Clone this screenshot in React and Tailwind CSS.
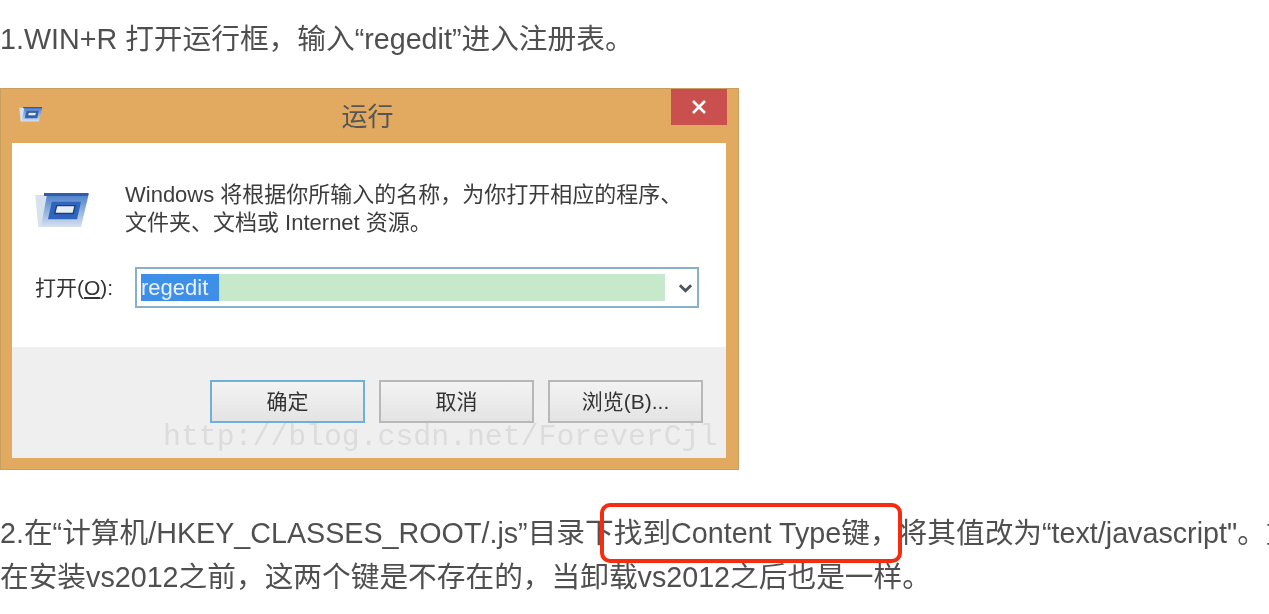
const FONT = "font-['Liberation_Sans','Noto_Sans_CJK_SC',sans-serif]"

function RunIcon({ className }) {
  return (
    <svg viewBox="0 0 56 36" className={className}>
      <defs>
        <linearGradient id="runBody" x1="0" y1="0" x2="0" y2="1">
          <stop offset="0" stopColor="#4a7ecb" />
          <stop offset="1" stopColor="#d5e1ee" />
        </linearGradient>
      </defs>
      <path d="M9 1H55L47 35H3Z" fill="url(#runBody)" />
      <path d="M0 2H12L6 34H3Z" fill="#d6e2ee" />
      <path d="M9 0H55L54 3H9Z" fill="#2f5da8" />
      <path d="M17 9H47L43 27H13Z" fill="#2f66bd" />
      <path d="M22 13H41L39 21H20Z" fill="#e6eef8" stroke="#1f3f78" strokeWidth="1.5" />
    </svg>
  )
}

function DialogButton({ label, focused }) {
  return (
    <div
      className={`flex h-[43px] w-[155px] items-center justify-center border-2 bg-gradient-to-b from-[#f3f3f3] to-[#e4e4e4] text-[21px] text-[#333] ${
        focused ? 'border-[#6fb0d8]' : 'border-[#b8b8b8]'
      }`}
    >
      {label}
    </div>
  )
}

function RunDialog() {
  return (
    <div className="relative w-[739px] border border-[#c99f60] bg-[#e1aa60] pb-[11px] pl-[11px] pr-[12px] blur-[0.4px]">
      <div className="relative flex h-[54px] items-center justify-center pt-[2px]">
        <RunIcon className="absolute left-[6px] top-[18px] h-[15px] w-[26px]" />
        <span className="pr-[3px] text-[26px] text-[#555]">运行</span>
        <div className="absolute right-[-1px] top-0 flex h-[36px] w-[56px] items-center justify-center bg-[#c9504f]">
          <svg viewBox="0 0 16 16" className="h-[16px] w-[16px]">
            <path d="M2 2L14 14M14 2L2 14" stroke="#fff" strokeWidth="2.6" />
          </svg>
        </div>
      </div>

      <div className="bg-white">
        <div className="h-[204px] pl-[23px] pr-[26px] pt-[38px]">
          <div className="flex gap-[35px]">
            <RunIcon className="mt-[12px] h-[35px] w-[55px] shrink-0" />
            <p className="whitespace-nowrap text-[22px] leading-[28px] text-[#3c3c3c]">
              Windows 将根据你所输入的名称，为你打开相应的程序、
              <br />
              文件夹、文档或 Internet 资源。
            </p>
          </div>
          <div className="mt-[30px] flex items-center gap-[20px]">
            <span className="w-[80px] text-[21px] text-[#333]">
              打开(<span className="underline">O</span>):
            </span>
            <div className="flex h-[41px] w-[564px] items-center border-2 border-[#86b1c9] pl-[4px]">
              <div className="h-[27px] w-[524px] bg-[#c6e9cc]">
                <span className="block h-[27px] w-[78px] bg-[#3e8fe8] text-[22px] leading-[27px] text-[#e8f2ff]">
                  regedit
                </span>
              </div>
              <svg viewBox="0 0 16 10" className="ml-[13px] h-[10px] w-[15px]">
                <path d="M2 2L8 8L14 2" fill="none" stroke="#4a5560" strokeWidth="3" />
              </svg>
            </div>
          </div>
        </div>

        <div className="relative flex h-[111px] justify-end gap-[14px] bg-[#efefef] pr-[23px] pt-[33px]">
          <DialogButton label="确定" focused />
          <DialogButton label="取消" />
          <DialogButton label="浏览(B)..." />
          <span className="absolute bottom-[4px] left-[151px] font-['Liberation_Mono',monospace] text-[29.8px] leading-[34px] text-[#dcdcdc]">
            http://blog.csdn.net/ForeverCjl
          </span>
        </div>
      </div>
    </div>
  )
}

export default function App() {
  return (
    <div className={`${FONT} h-[614px] overflow-hidden bg-white pt-[19px] text-[28.7px] text-[#4f4f4f]`}>
      <p className="h-[40px] leading-[40px] blur-[0.3px]">1.WIN+R 打开运行框，输入“regedit”进入注册表。</p>
      <div className="mt-[29px]">
        <RunDialog />
      </div>
      <div className="relative mt-[41px]">
        <p className="whitespace-nowrap leading-[44px] blur-[0.3px]">
          2.在“计算机/HKEY_CLASSES_ROOT/.js”目录下找到Content Type键，将其值改为“text/javascript"。重
        </p>
        <p className="whitespace-nowrap leading-[44px] blur-[0.3px]">
          在安装vs2012之前，这两个键是不存在的，当卸载vs2012之后也是一样。
        </p>
        <div className="absolute left-[600px] top-[-8px] h-[60px] w-[302px] rounded-[10px] border-[4px] border-[#f42c10]" />
      </div>
    </div>
  )
}
